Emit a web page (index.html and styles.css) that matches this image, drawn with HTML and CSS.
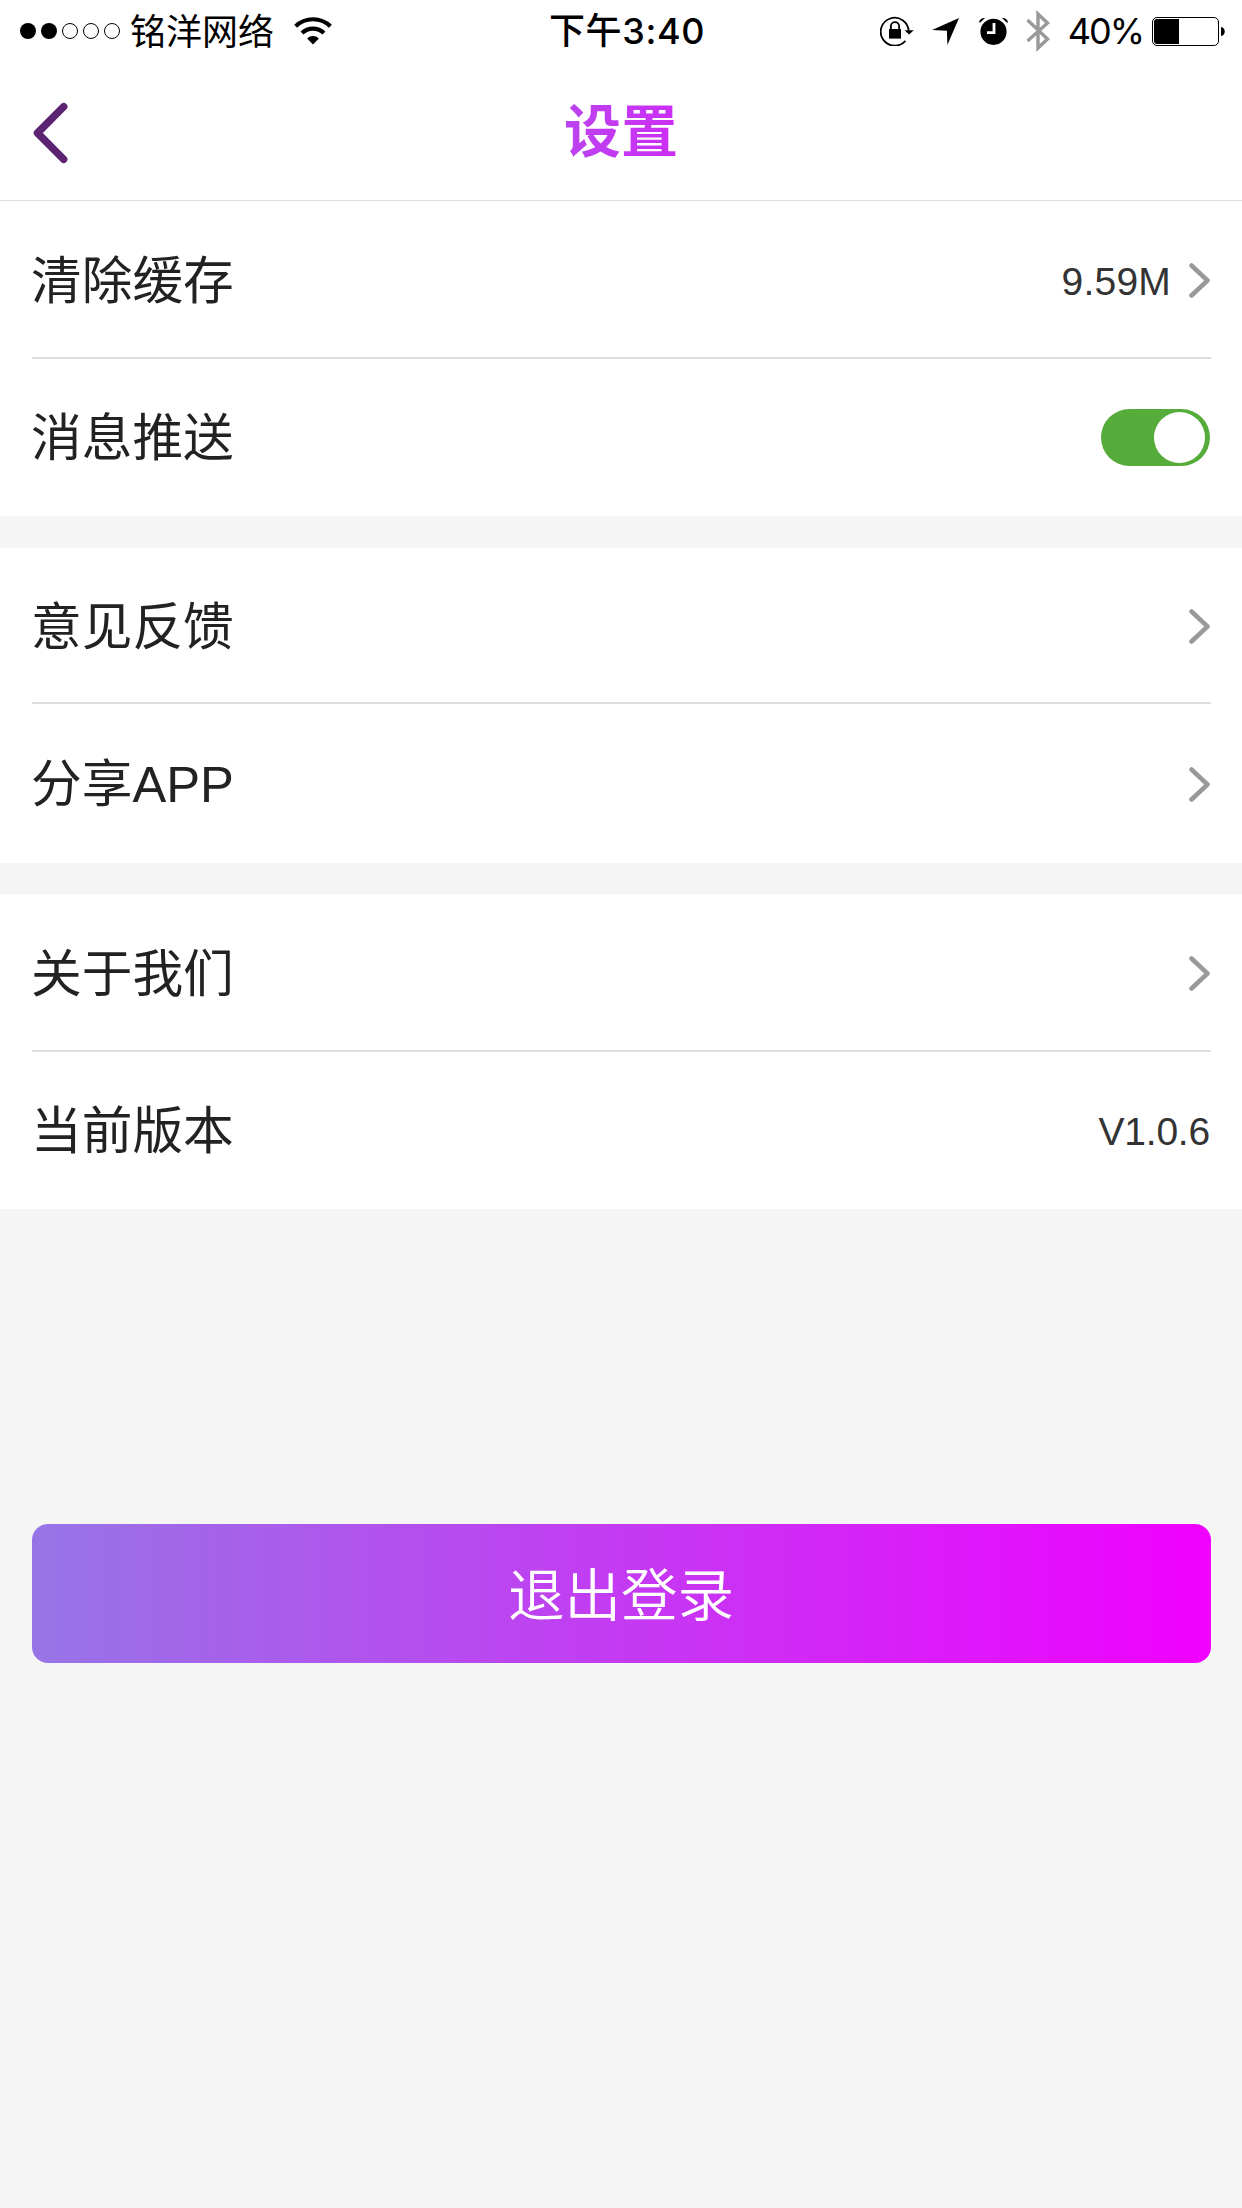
FILE: index.html
```html
<!DOCTYPE html>
<html lang="zh-CN">
<head>
<meta charset="utf-8">
<title>设置</title>
<link rel="stylesheet" href="styles.css">
</head>
<body>
<header class="top">
  <div class="status">
    <div class="status-left">
      <svg class="signal" width="102" height="18" viewBox="0 0 102 18">
        <circle cx="8" cy="9" r="8"/><circle cx="29" cy="9" r="8"/>
        <g fill="none" stroke="#000" stroke-width="1"><circle cx="50" cy="9" r="7.5"/><circle cx="71" cy="9" r="7.5"/><circle cx="92" cy="9" r="7.5"/></g>
      </svg>
      <span class="carrier">铭洋网络</span>
      <svg class="wifi" width="38" height="28" viewBox="0 0 38 28">
        <g fill="none" stroke="#000" stroke-width="4.2"><path d="M1.6 9.3A25 25 0 0 1 36.4 9.3"/><path d="M8 16A16 16 0 0 1 30 16"/></g>
        <path d="M19 27.5l-5.9-6.1a8.4 8.4 0 0 1 11.8 0z"/>
      </svg>
    </div>
    <div class="clock">下午3:40</div>
    <div class="status-right">
      <svg class="lock" width="34" height="31" viewBox="0 0 34 31">
        <path d="M25.4 25.8A14 14 0 1 1 28.7 16" fill="none" stroke="#000" stroke-width="1.8"/>
        <path d="M24.5 15.2h9.3l-4.7 4.4z"/>
        <path d="M9 14h12v9.6H9z"/><path d="M10.9 15v-3.700a4.100 4.100 0 0 1 8.200 0V15" fill="none" stroke="#000" stroke-width="1.8"/>
      </svg>
      <svg class="arrow" width="28" height="27" viewBox="0 0 28 27"><path d="M27 0L15.4 27l-.5-14.2L0 12z"/></svg>
      <svg class="alarm" width="29" height="28" viewBox="0 0 29 28">
        <circle cx="14.5" cy="14.8" r="13.1"/><path d="M0 5.400C.5 2.400 2.800.7 6 1L1.300 5.400zM29 5.400C28.500 2.400 26.200.7 23 1l4.700 4.400z"/>
        <path d="M15 6v9.700H8" fill="none" stroke="#fff" stroke-width="2.800"/>
      </svg>
      <svg class="bluetooth" width="24" height="42" viewBox="0 0 24 42"><path d="M1.500 10L21.500 29 12 38V4l9.500 9L1.500 31" fill="none" stroke="#999" stroke-width="3.400"/></svg>
      <span class="percent">40%</span>
      <svg class="battery" width="74" height="29" viewBox="0 0 74 29">
        <rect x=".5" y=".5" width="66" height="28" rx="4.500" fill="none" stroke="#000"/>
        <path d="M5 2h22v25H5a3 3 0 0 1-3-3V5a3 3 0 0 1 3-3zM69 10c5 .5 5 8.500 0 9z"/>
      </svg>
    </div>
  </div>
  <div class="nav">
    <svg class="back" width="36" height="62" viewBox="0 0 36 62"><path d="M31.700 4.700L5.500 31 31.700 57.300" fill="none" stroke="#5d2373" stroke-width="7.500" stroke-linecap="round" stroke-linejoin="round"/></svg>
    <h1 class="title">设置</h1>
  </div>
</header>
<main>
  <section class="group">
    <div class="row"><span class="label">清除缓存</span><span class="value">9.59M</span><svg class="chevron" width="21" height="35" viewBox="0 0 21 35"><path d="M2.500 2.500L18.500 17.500 2.500 32.500"/></svg></div>
    <div class="row"><span class="label">消息推送</span><span class="toggle"><span class="knob"></span></span></div>
  </section>
  <section class="group second">
    <div class="row"><span class="label">意见反馈</span><svg class="chevron" width="21" height="35" viewBox="0 0 21 35"><path d="M2.500 2.500L18.500 17.500 2.500 32.500"/></svg></div>
    <div class="row"><span class="label">分享APP</span><svg class="chevron" width="21" height="35" viewBox="0 0 21 35"><path d="M2.500 2.500L18.500 17.500 2.500 32.500"/></svg></div>
  </section>
  <section class="group third">
    <div class="row"><span class="label">关于我们</span><svg class="chevron" width="21" height="35" viewBox="0 0 21 35"><path d="M2.500 2.500L18.500 17.500 2.500 32.500"/></svg></div>
    <div class="row"><span class="label">当前版本</span><span class="value">V1.0.6</span></div>
  </section>
  <button class="logout" type="button">退出登录</button>
</main>
</body>
</html>
```
FILE: styles.css
```css
* { box-sizing: border-box; }
body {
  margin: 0;
  width: 1242px;
  min-height: 2208px;
  background: #f5f5f5;
  color: #222;
  font-family: "Liberation Sans", "Noto Sans CJK SC", sans-serif;
}
svg { display: block; flex: none; }
.top { height: 201px; background: #fff; border-bottom: 1px solid #ddd; }

/* Status bar */
.status {
  display: grid;
  grid-template-columns: 1fr auto 1fr;
  height: 60px;
  padding: 0 16px 0 20px;
  color: #000;
  font: 36px/60px Inter, "Noto Sans CJK SC", sans-serif;
  white-space: nowrap;
}
.status-left, .status-right { display: flex; align-items: center; }
.status-right { justify-content: flex-end; }
.carrier { margin-left: 8px; padding-top: 2px; }
.wifi { margin-left: 20px; }
.clock { font-weight: 500; letter-spacing: .6px; padding: 1px 0 0 8px; }
.lock { margin-top: -1px; }
.arrow { margin: 1px 0 0 18px; }
.alarm { margin: -1px 0 0 19px; }
.bluetooth { margin-left: 18px; }
.percent { margin-left: 18px; letter-spacing: -2px; }
.battery { margin: 0 0 0 9px; }

/* Title bar */
.nav {
  display: grid;
  grid-template-columns: 36px 1fr 36px;
  align-items: center;
  height: 140px;
  padding: 0 32px;
}
.back { margin-top: 5px; }
.title {
  justify-self: center;
  margin: 0;
  padding-top: 4px;
  font-size: 57px;
  line-height: 136px;
  font-weight: 700;
  color: transparent;
  background: linear-gradient(90deg, #bb43ef, #cc2df5);
  -webkit-background-clip: text;
  background-clip: text;
}

/* Settings list */
.group { padding: 0 31px; background: #fff; }
.second, .third { margin-top: 32px; }
.third { margin-top: 31px; }
.row { display: flex; align-items: center; height: 157px; padding: 2px 1px 0 0; }
.row:first-child {
  height: 158px;
  padding-top: 5px;
  background: linear-gradient(#ddd, #ddd) 1px 100% / 100% 2px no-repeat;
  padding-bottom: 2px;
}
.row:last-child .toggle { margin-top: -2px; }
.second .row:first-child { height: 156px; }
.second .row:last-child { height: 159px; }
.label { flex: 1; font-size: 50.7px; line-height: 72px; }
.value { color: #333; font-size: 39px; line-height: 60px; }
.row:first-child .value { letter-spacing: .2px; }
.row:last-child .value { letter-spacing: -.2px; }
.chevron { margin: -3px 0 0 18px; fill: none; stroke: #999; stroke-width: 4.5; stroke-linecap: round; stroke-linejoin: round; }
.row:last-child .chevron { margin-top: -1px; }
.toggle {
  display: flex;
  justify-content: flex-end;
  align-items: center;
  width: 109px;
  height: 57px;
  padding-right: 5px;
  border-radius: 29px;
  background: #56ac3a;
}
.knob { width: 51px; height: 51px; border-radius: 50%; background: #fff; }

.logout {
  display: block;
  width: 1179px;
  height: 139px;
  margin: 315px 31px 0 32px;
  padding: 0 1px 5px 0;
  border: 0;
  border-radius: 16px;
  background: linear-gradient(90deg, #9775e6, #f000ff);
  color: #fff;
  font: 350 56.5px/134px "Noto Sans CJK SC", sans-serif;
}
```
